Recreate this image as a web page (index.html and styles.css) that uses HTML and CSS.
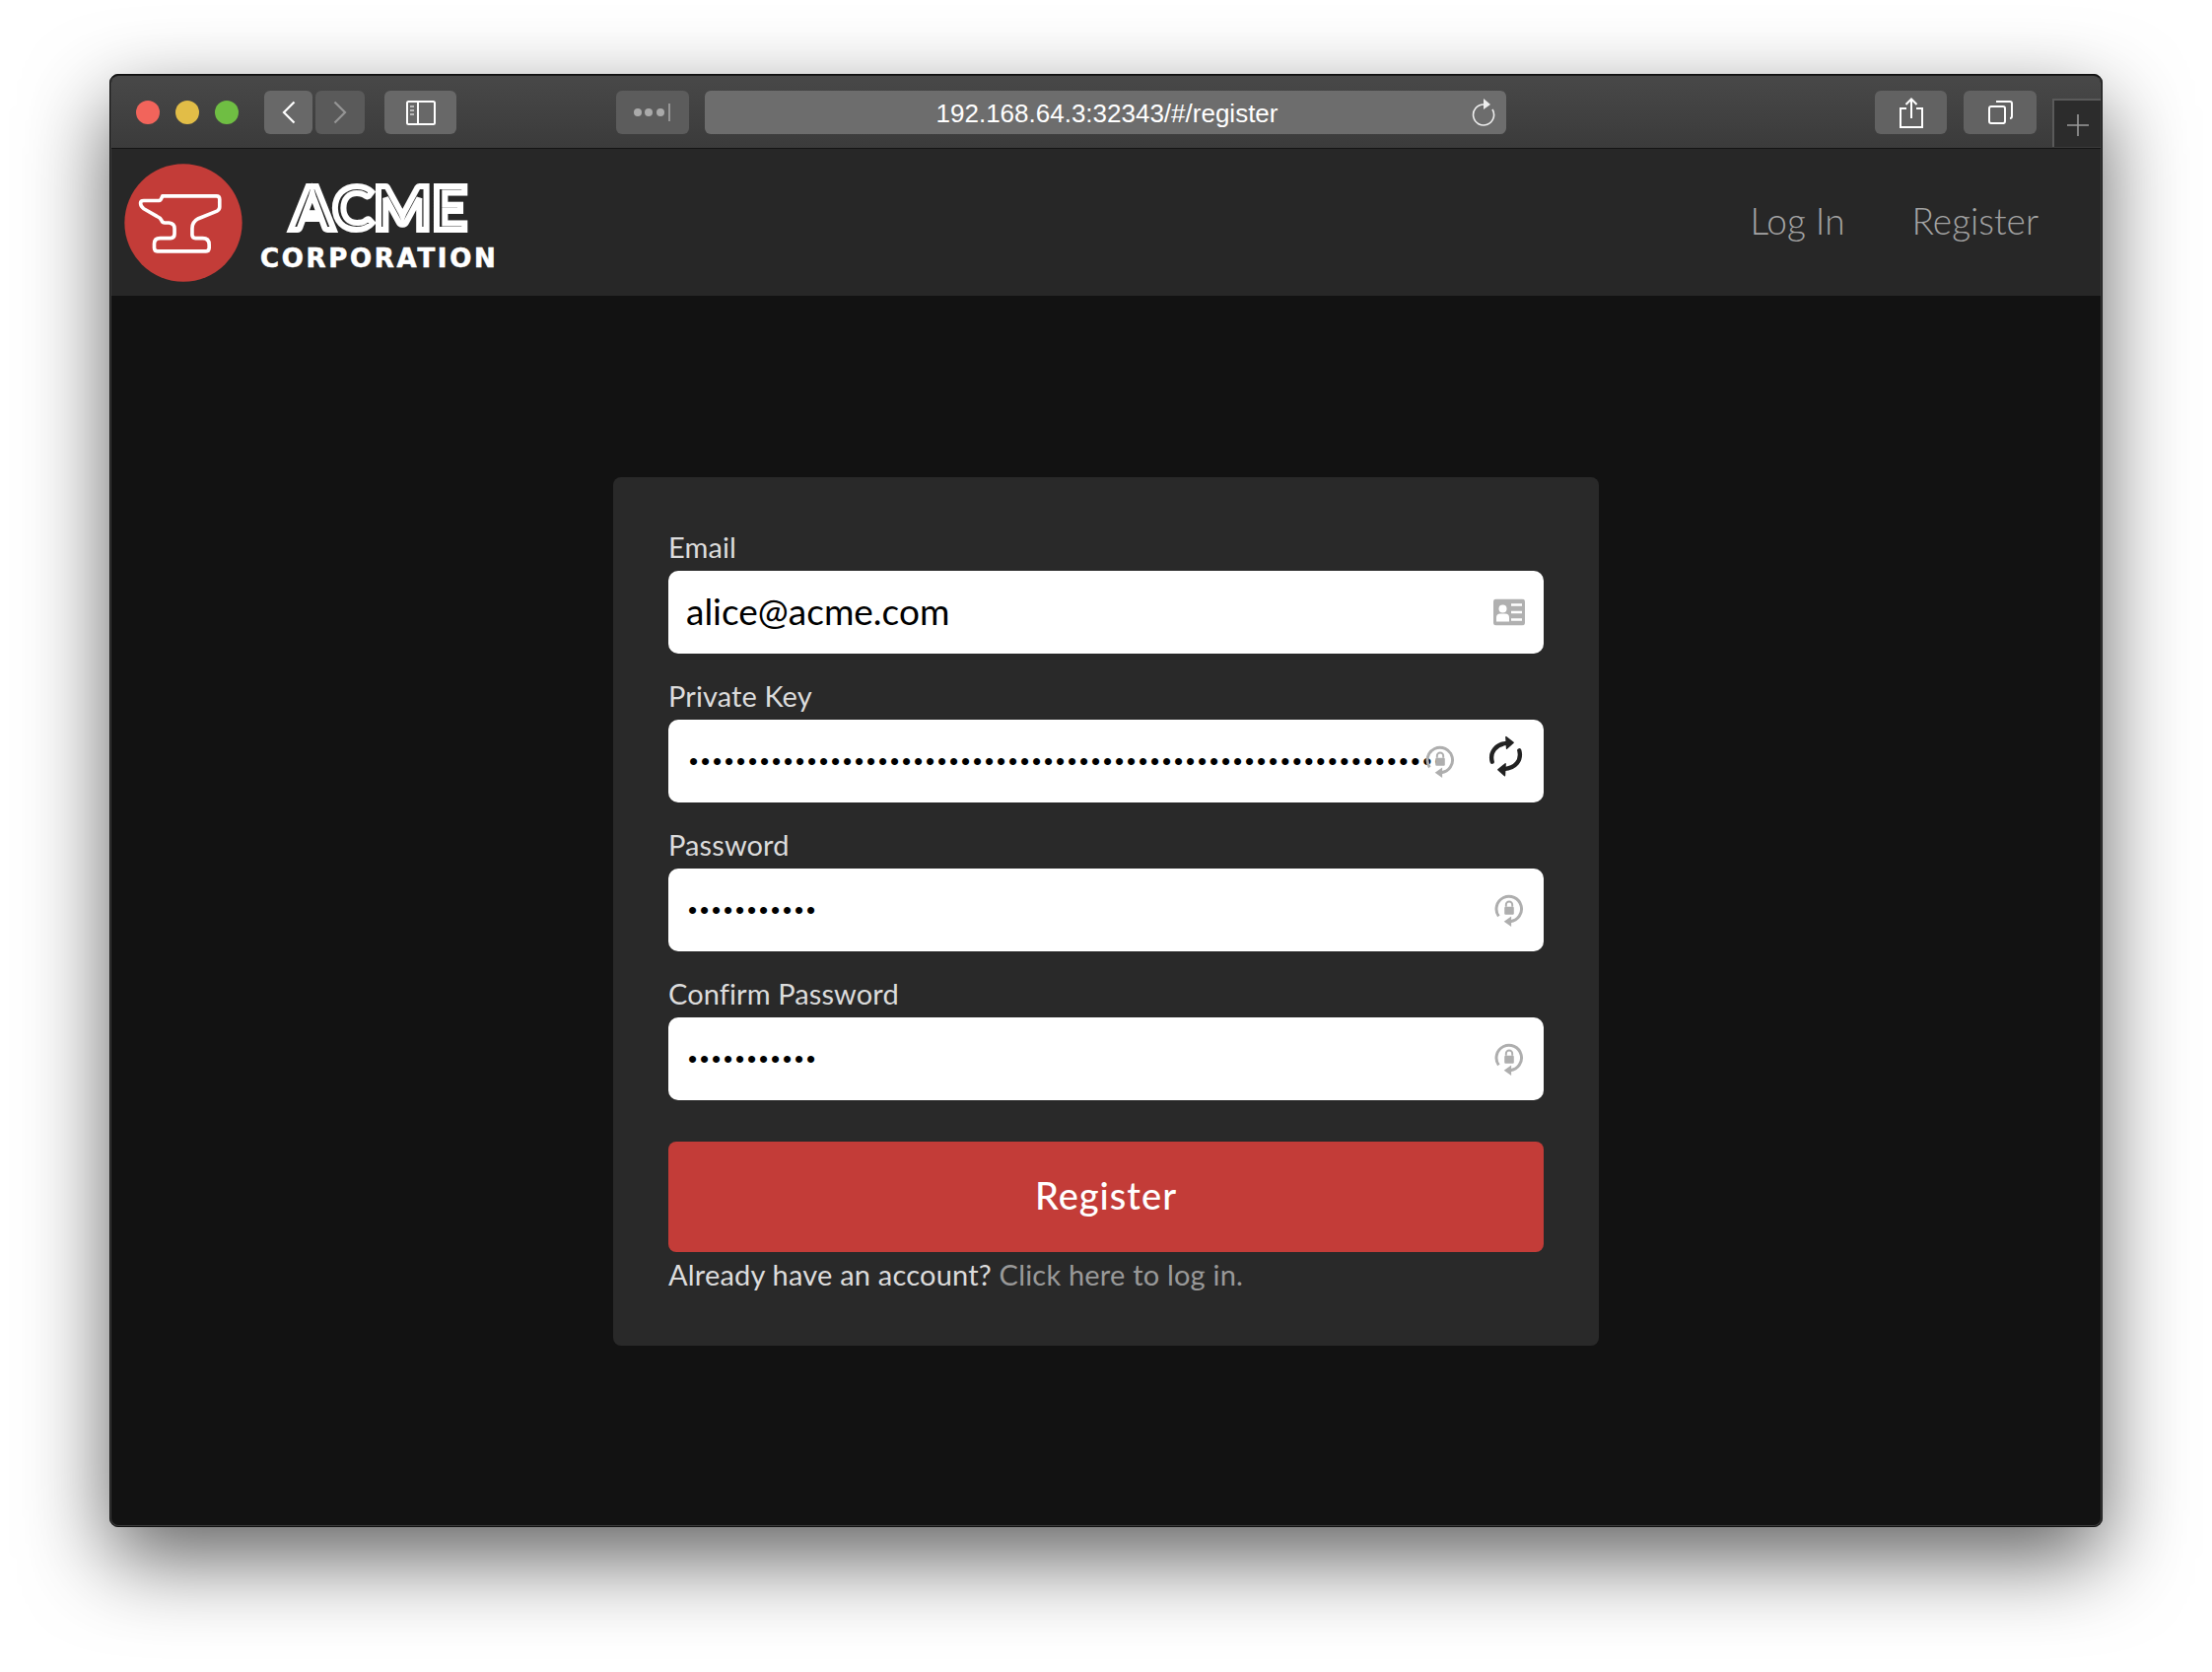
FILE: index.html
```html
<!DOCTYPE html>
<html lang="en">
<head>
    <meta charset="UTF-8">
    <meta name="viewport" content="width=device-width, initial-scale=1.0">
    <title>Register - ACME Corporation</title>
    <link rel="stylesheet" href="styles.css">
</head>
<body>
    <svg class="defs" aria-hidden="true">
        <symbol id="icon-keylock" viewBox="0 0 28 32">
            <path d="M4 22 A12 12 0 1 1 15 27" fill="none" stroke="currentColor" stroke-width="2.8"/>
            <path d="M16 22 L16 32 L9 27 Z" fill="currentColor"/>
            <rect x="9.5" y="13" width="9" height="7.5" rx="1" fill="currentColor"/>
            <path d="M11 13 V11 A3 3 0 0 1 17 11 V13" fill="none" stroke="currentColor" stroke-width="1.8"/>
        </symbol>
    </svg>

    <div class="window">
        <div class="toolbar">
            <div class="lights">
                <span class="light light-red"></span>
                <span class="light light-yellow"></span>
                <span class="light light-green"></span>
            </div>
            <div class="nav-buttons">
                <span class="tool tool-back">
                    <svg width="14" height="24" viewBox="0 0 14 24"><path d="M12.5 1.5 L2 12 L12.5 22.5" fill="none" stroke="#fff" stroke-width="2.2"/></svg>
                </span>
                <span class="tool tool-forward">
                    <svg width="14" height="24" viewBox="0 0 14 24"><path d="M1.5 1.5 L12 12 L1.5 22.5" fill="none" stroke="#959595" stroke-width="2.2"/></svg>
                </span>
            </div>
            <span class="tool tool-sidebar">
                <svg width="30" height="25" viewBox="0 0 30 25">
                    <rect x="1" y="1" width="28" height="23" rx="1.5" fill="none" stroke="#fff" stroke-width="2"/>
                    <path d="M12 1 V24" stroke="#fff" stroke-width="2"/>
                    <path d="M4 6 H8 M4 10 H8 M4 14 H8" stroke="#bbb" stroke-width="2"/>
                </svg>
            </span>
            <span class="tool tool-reader">
                <svg width="38" height="20" viewBox="0 0 38 20">
                    <circle cx="4" cy="10" r="4" fill="#aaa"/>
                    <circle cx="15" cy="10" r="4" fill="#aaa"/>
                    <circle cx="27" cy="10" r="4" fill="#aaa"/>
                    <path d="M36 1 V19" stroke="#aaa" stroke-width="1.5"/>
                </svg>
            </span>
            <div class="urlbar">
                <span class="url">192.168.64.3:32343/#/register</span>
                <svg class="reload" width="26" height="28" viewBox="0 0 26 28">
                    <path d="M13 6 A10.5 10.5 0 1 0 22 11" fill="none" stroke="#eee" stroke-width="1.6"/>
                    <path d="M13 0 L20 6 L13 11 Z" fill="#eee"/>
                </svg>
            </div>
            <span class="tool tool-share">
                <svg width="24" height="31" viewBox="0 0 24 31">
                    <path d="M7 11 H1 V30 H23 V11 H17" fill="none" stroke="#fff" stroke-width="2"/>
                    <path d="M12 21 V2 M6.5 7 L12 1.5 L17.5 7" fill="none" stroke="#fff" stroke-width="2"/>
                </svg>
            </span>
            <span class="tool tool-tabs">
                <svg width="25" height="24" viewBox="0 0 25 24">
                    <rect x="1" y="6" width="16" height="17" rx="2" fill="none" stroke="#fff" stroke-width="2"/>
                    <path d="M8 1 H22 Q24 1 24 3 V16 Q24 18 22 18" fill="none" stroke="#fff" stroke-width="2"/>
                </svg>
            </span>
            <span class="new-tab">
                <svg width="22" height="22" viewBox="0 0 22 22"><path d="M11 0 V22 M0 11 H22" stroke="#9a9a9a" stroke-width="1.6"/></svg>
            </span>
        </div>

        <header class="navbar">
            <a class="brand" href="#/">
                <svg class="brand-mark" width="120" height="120" viewBox="18 18 362 360">
                    <circle cx="199" cy="198" r="180" fill="#c33c38"/>
                    <!-- anvil outline, traced at 3x -->
                    <path d="M135 116 L300 116 Q310 116 310 126 L310 150 Q310 158 302 162 L245 185 Q226 195 226 215 L226 235 Q226 245 236 245 L258 245 Q278 245 278 265 L278 275 Q278 285 268 285 L120 285 Q110 285 110 275 L110 262 Q110 245 128 245 L160 245 Q172 245 172 232 L172 215 Q172 200 155 198 L142 198 Q135 198 132 190 Q128 182 118 178 L78 155 Q68 148 68 138 Q68 130 78 130 L125 130 Q130 130 135 116 Z" fill="none" stroke="#fff" stroke-width="11" stroke-linejoin="round"/>
                </svg>
                <span class="brand-text">
                    <span class="brand-name">ACME</span>
                    <span class="brand-sub">CORPORATION</span>
                </span>
            </a>
            <nav class="nav-links">
                <a href="#/login">Log In</a>
                <a href="#/register">Register</a>
            </nav>
        </header>

        <main class="content">
            <form class="card">
                <div class="field">
                    <label class="field-label" for="email">Email</label>
                    <div class="input-wrap">
                        <input class="input" id="email" type="email" value="alice@acme.com">
                        <svg class="input-icon icon-card" width="32" height="27" viewBox="0 0 32 27">
                            <rect width="32" height="27" rx="3" fill="#b0b0b0"/>
                            <circle cx="9.5" cy="10" r="4" fill="#fff"/>
                            <path d="M3 23 V19 Q3 15 7 15 H12 Q16 15 16 19 V23 Z" fill="#fff"/>
                            <path d="M18 6 H29 M18 13.5 H29 M18 21 H29" stroke="#fff" stroke-width="2.4"/>
                        </svg>
                    </div>
                </div>

                <div class="field">
                    <label class="field-label" for="key">Private Key</label>
                    <div class="input-wrap">
                        <input class="input input-secret input-key" id="key" type="password" value="0123456789012345678901234567890123456789012345678901234567890123">
                        <svg class="input-icon icon-keylock icon-keylock-inset"><use href="#icon-keylock"/></svg>
                        <svg class="input-icon icon-sync" width="37" height="43" viewBox="0 0 110 128">
                            <path d="M14 78 C6 48 26 24 60 22" fill="none" stroke="#222" stroke-width="13" stroke-linecap="round"/>
                            <path d="M56 3 L78 20 L58 38 Z" fill="#222" stroke="#222" stroke-width="4" stroke-linejoin="round"/>
                            <path d="M96 44 C104 74 84 98 50 100" fill="none" stroke="#222" stroke-width="13" stroke-linecap="round"/>
                            <path d="M54 84 L32 102 L52 120 Z" fill="#222" stroke="#222" stroke-width="4" stroke-linejoin="round"/>
                        </svg>
                    </div>
                </div>

                <div class="field">
                    <label class="field-label" for="password">Password</label>
                    <div class="input-wrap">
                        <input class="input input-secret" id="password" type="password" value="hunter12345">
                        <svg class="input-icon icon-keylock"><use href="#icon-keylock"/></svg>
                    </div>
                </div>

                <div class="field">
                    <label class="field-label" for="confirm">Confirm Password</label>
                    <div class="input-wrap">
                        <input class="input input-secret" id="confirm" type="password" value="hunter12345">
                        <svg class="input-icon icon-keylock"><use href="#icon-keylock"/></svg>
                    </div>
                </div>

                <button class="submit" type="button">Register</button>
                <p class="switch">Already have an account? <a href="#/login">Click here to log in.</a></p>
            </form>
        </main>
    </div>
</body>
</html>
```

FILE: styles.css
```css
* {
    box-sizing: border-box;
}

html, body {
    height: 100%;
}

body {
    margin: 0;
    background: #fff;
    overflow: hidden;
    font-family: "Lato", "Open Sans", sans-serif;
}

a {
    text-decoration: none;
}

.defs {
    display: none;
}

.window {
    width: 2022px;
    height: 1474px;
    margin: 75px 0 0 111px;
    display: flex;
    flex-direction: column;
    background: #121212;
    border: 2px solid #3c3c3c;
    border-top-color: #1c1c1c;
    border-radius: 9px;
    overflow: hidden;
    outline: 1px solid #111;
    outline-offset: -1px;
    box-shadow: 0 32px 85px rgba(0,0,0,0.62);
}

/* browser chrome */
.toolbar {
    flex: none;
    height: 74px;
    display: flex;
    align-items: flex-start;
    padding: 15px 0 0 25px;
    background: linear-gradient(#484848, #3b3b3b);
    border-bottom: 1px solid #141414;
}

.lights {
    display: flex;
    gap: 16px;
    margin: 10px 26px 0 0;
}

.light {
    width: 24px;
    height: 24px;
    border-radius: 50%;
}

.light-red { background: #f2645b; }
.light-yellow { background: #e2bd47; }
.light-green { background: #6fbe43; }

.nav-buttons {
    display: flex;
    gap: 3px;
    margin-right: 20px;
}

.tool {
    height: 44px;
    display: flex;
    align-items: center;
    justify-content: center;
    background: #686868;
    border-radius: 6px;
}

.tool-back { width: 49px; }
.tool-forward { width: 50px; background: #5a5a5a; }
.tool-sidebar { width: 73px; margin-right: 162px; }
.tool-reader { width: 74px; margin-right: 16px; background: #5c5c5c; }
.tool-share { width: 73px; margin-right: 17px; background: #626262; }
.tool-tabs { width: 74px; margin-right: 16px; background: #626262; }

.urlbar {
    width: 813px;
    height: 44px;
    margin-right: 374px;
    display: flex;
    align-items: center;
    justify-content: center;
    position: relative;
    background: #6d6d6d;
    border-radius: 6px;
}

.url {
    padding: 2px 0 0 3px;
    color: #fff;
    font-family: "Liberation Sans", sans-serif;
    font-size: 26px;
}

.reload {
    position: absolute;
    right: 10px;
    top: 8px;
}

.new-tab {
    width: 49px;
    height: 49px;
    margin-top: 8px;
    padding-top: 2px;
    display: flex;
    align-items: center;
    justify-content: center;
    background: #2c2c2c;
    border-top: 2px solid #5a5a5a;
    border-left: 2px solid #5a5a5a;
}

/* site header */
.navbar {
    flex: none;
    height: 149px;
    display: flex;
    align-items: center;
    justify-content: space-between;
    padding: 0 63px 0 13px;
    background: #272727;
}

.brand {
    display: flex;
    align-items: center;
    gap: 18px;
    color: #fff;
}

.brand-text {
    display: flex;
    flex-direction: column;
    align-items: center;
    gap: 8px;
    padding-top: 4px;
}

.brand-name {
    height: 60px;
    font-size: 62px;
    line-height: 54px;
    font-weight: 700;
    color: #272727;
    -webkit-text-stroke: 6px #fff;
    letter-spacing: 0.5px;
}

.brand-sub {
    height: 24px;
    font-family: "DejaVu Sans", sans-serif;
    font-size: 26px;
    line-height: 24px;
    font-weight: 700;
    -webkit-text-stroke: 0.6px #fff;
    letter-spacing: 2.7px;
}

.nav-links {
    display: flex;
    gap: 68px;
    padding-bottom: 4px;
}

.nav-links a {
    color: #a4a4a4;
    font-size: 37px;
    font-weight: 300;
}

/* register form */
.content {
    flex: 1;
    padding-top: 184px;
}

.card {
    width: 1000px;
    height: 881px;
    margin-left: 509px;
    padding: 56px;
    background: #292929;
    border-radius: 8px;
}

.field {
    margin-bottom: 28px;
}

.field-label {
    display: block;
    height: 39px;
    line-height: 30px;
    color: #dcdcdc;
    font-size: 29px;
    letter-spacing: 0.1px;
}

.input-wrap {
    position: relative;
}

.input {
    display: block;
    width: 100%;
    height: 84px;
    padding: 0 18px 3px;
    background: #fff;
    border: none;
    border-radius: 10px;
    color: #000;
    font-family: inherit;
    font-size: 37px;
    outline: none;
}

.input-secret {
    padding: 0 18px 0 20px;
    font-family: "Liberation Sans", sans-serif;
    font-size: 26px;
    letter-spacing: 2.9px;
}

.input-key {
    padding-left: 21px;
}

.input-icon {
    position: absolute;
    top: 50%;
    transform: translateY(-50%);
    right: 20px;
}

.icon-card {
    right: 19px;
}

.icon-keylock {
    width: 30px;
    height: 34px;
    right: 20px;
    color: #aeaeae;
}

.icon-keylock-inset {
    right: 90px;
}

.icon-sync {
    right: 20px;
    margin-top: -4px;
}

.submit {
    display: block;
    width: 100%;
    height: 112px;
    margin-top: 42px;
    padding-bottom: 6px;
    background: #c33c38;
    border: none;
    border-radius: 8px;
    color: #fff;
    font-family: inherit;
    font-size: 38px;
    font-weight: 500;
    letter-spacing: 1px;
}

.switch {
    margin: 3px 0 0;
    color: #dcdcdc;
    font-size: 29px;
    line-height: 40px;
    letter-spacing: 0.2px;
}

.switch a {
    color: #999;
}
```
